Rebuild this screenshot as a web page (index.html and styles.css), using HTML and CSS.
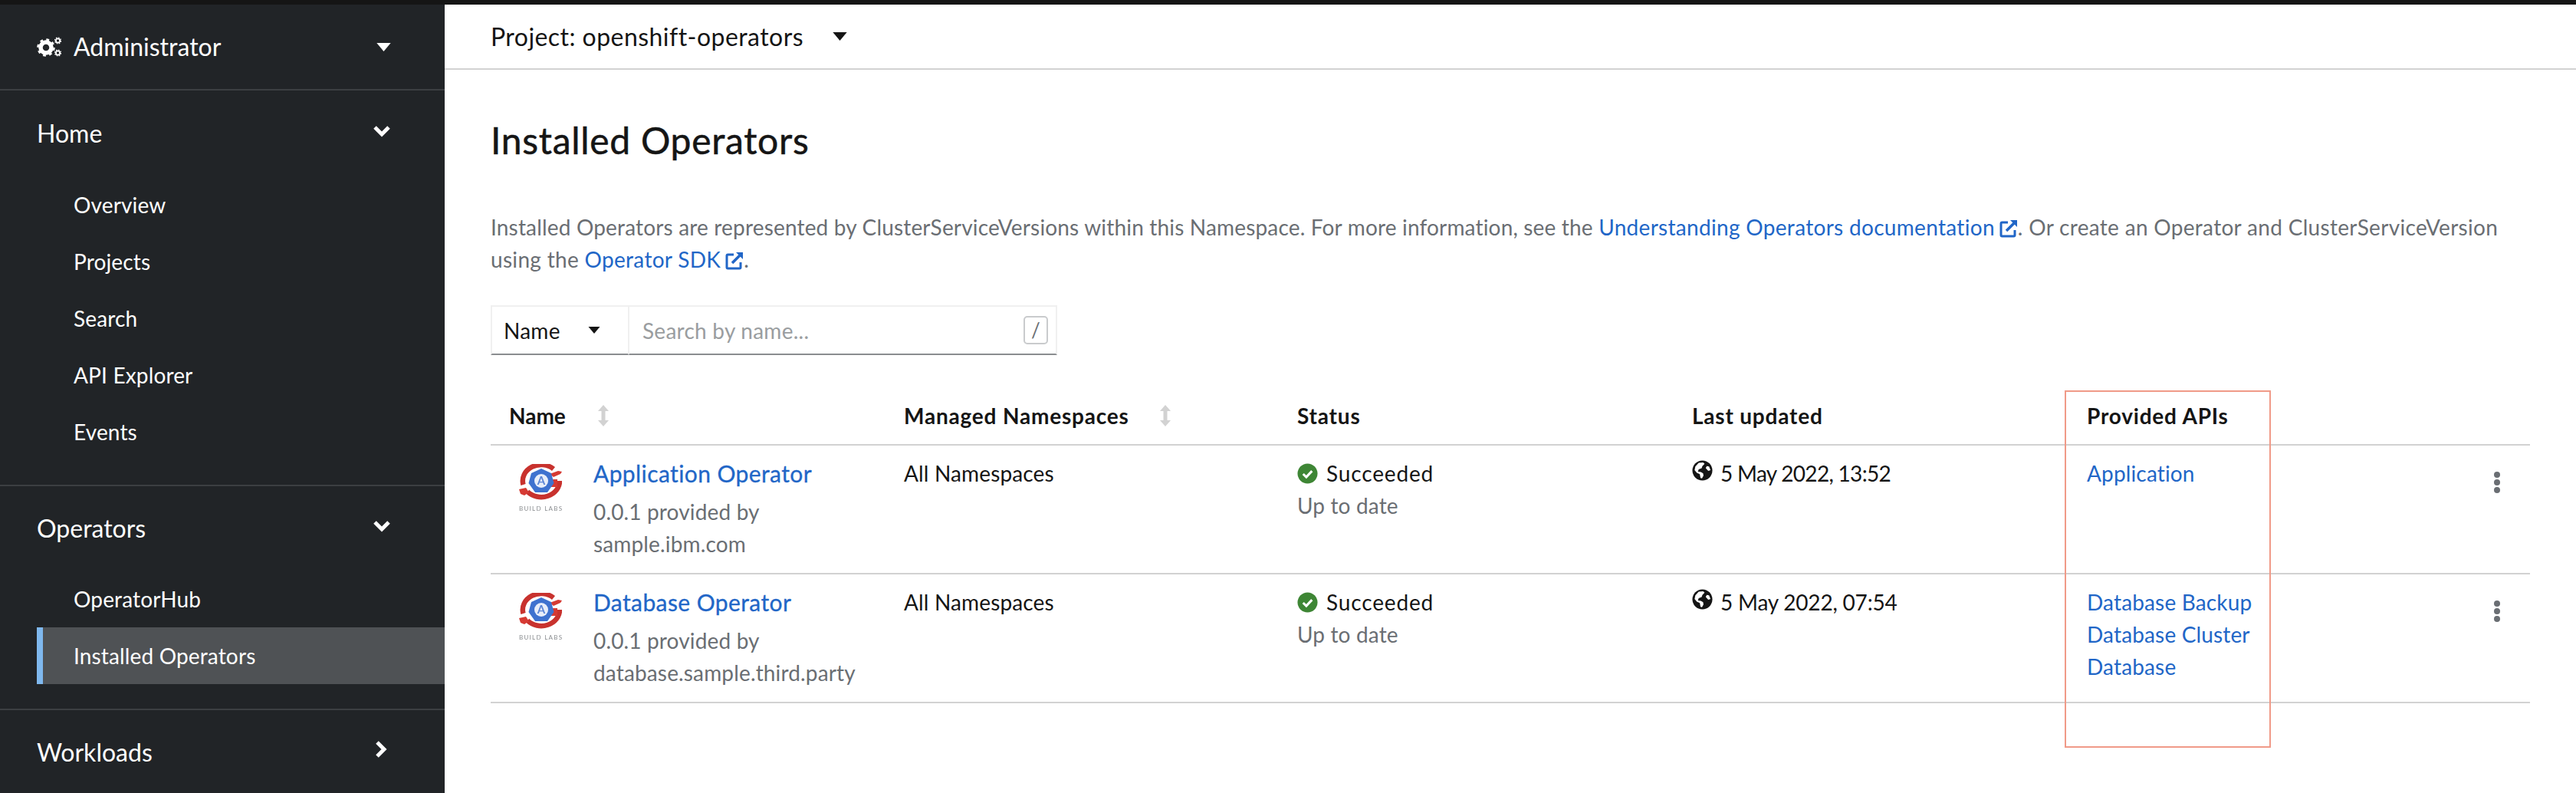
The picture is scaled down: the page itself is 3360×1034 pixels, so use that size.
FILE: index.html
```html
<!DOCTYPE html>
<html lang="en">
<head>
<meta charset="utf-8">
<title>Installed Operators</title>
<link rel="stylesheet" href="styles.css">
</head>
<body>
<svg class="defs" width="0" height="0" aria-hidden="true">
  <defs>
    <symbol id="logo" viewBox="0 0 56 62">
      <g class="logo-art">
        <path d="M45 6.500A24 21 0 0 0 5.500 27" fill="none" stroke="#c8322e" stroke-width="6.500"/>
        <path d="M11 36A24 21 0 0 0 53 22" fill="none" stroke="#c8322e" stroke-width="6.500"/>
        <path d="M0 33l9-2 4 6-6 4-5-2zM40 13l11-4 5 1-2 3-9 4zM42 20h8v10h-8z" fill="#d63a33"/>
        <path d="M29 6l13 6 3.500 13-8.500 12H21l-8.500-12L16 12z" fill="#3f72cf"/>
        <circle cx="29" cy="22" r="9" fill="#e9eef9"/>
        <text x="29" y="27" class="logo-a">A</text>
        <text x="28" y="61" class="logo-t" textLength="56">BUILD LABS</text>
      </g>
    </symbol>
    <symbol id="check" viewBox="0 0 28 28">
      <circle cx="14" cy="14" r="13.500" fill="#3e8635"/>
      <path d="M8 14.500l4.300 4.300L20 10.500" fill="none" stroke="#fff" stroke-width="3.200"/>
    </symbol>
    <symbol id="globe" viewBox="0 0 28 28">
      <circle cx="14" cy="14" r="13.500" fill="#151515"/>
      <path d="M9 3.500l6-.5 2 2-3 3-1 3-4 1.500-1 3 4 .5 3 2 .5 3-2 3.500-2-.5-1-5-4-2-3-3.500 1-5zM20 8l3 .5 2 5-3 1-2-2-1.500-2z" fill="#fff"/>
    </symbol>
    <symbol id="ext" viewBox="0 0 24 24">
      <path d="M11 4H3.500A1.500 1.500 0 0 0 2 5.500v15A1.500 1.500 0 0 0 3.500 22h15a1.500 1.500 0 0 0 1.500-1.500V14" fill="none" stroke="currentColor" stroke-width="3"/>
      <path d="M9 15L21 3" fill="none" stroke="currentColor" stroke-width="3.500"/>
      <path d="M14 1h9v9z" fill="currentColor"/>
    </symbol>
    <symbol id="sort" viewBox="0 0 14 28">
      <path d="M7 0l7 8H9.500v12H14l-7 8-7-8h4.500V8H0z" fill="#d2d2d2"/>
    </symbol>
    <symbol id="kebab" viewBox="0 0 8 28">
      <circle cx="4" cy="4" r="4"/><circle cx="4" cy="14" r="4"/><circle cx="4" cy="24" r="4"/>
    </symbol>
    <symbol id="chev-down" viewBox="0 0 24 16">
      <path d="M3 3l9 9 9-9" fill="none" stroke="#fff" stroke-width="5"/>
    </symbol>
    <symbol id="chev-right" viewBox="0 0 16 24">
      <path d="M3 3l9 9-9 9" fill="none" stroke="#fff" stroke-width="5"/>
    </symbol>
    <symbol id="caret" viewBox="0 0 20 12">
      <path d="M0 0h20L10 12z"/>
    </symbol>
    <symbol id="cogs" viewBox="0 0 32 26">
      <circle cx="12" cy="14" r="7" fill="none" stroke="#fff" stroke-width="5.500"/>
      <circle cx="12" cy="14" r="10.500" fill="none" stroke="#fff" stroke-width="2.500" stroke-dasharray="3.800 4.450"/>
      <circle cx="27.500" cy="5" r="2.600" fill="none" stroke="#fff" stroke-width="1.800"/>
      <circle cx="27.500" cy="5" r="4" fill="none" stroke="#fff" stroke-width="1.200" stroke-dasharray="1.700 1.440"/>
      <circle cx="27.500" cy="21" r="2.600" fill="none" stroke="#fff" stroke-width="1.800"/>
      <circle cx="27.500" cy="21" r="4" fill="none" stroke="#fff" stroke-width="1.200" stroke-dasharray="1.700 1.440"/>
    </symbol>
  </defs>
</svg>
<div class="topline"></div>
<div class="app">
  <nav class="sidebar">
    <div class="perspective">
      <span class="perspective-label"><svg class="ic-cogs"><use href="#cogs"/></svg>Administrator</span>
      <svg class="ic-caret-w"><use href="#caret"/></svg>
    </div>
    <section class="nav-group">
      <div class="nav-head first"><span>Home</span><svg class="ic-chev-d"><use href="#chev-down"/></svg></div>
      <a class="nav-item">Overview</a>
      <a class="nav-item">Projects</a>
      <a class="nav-item">Search</a>
      <a class="nav-item">API Explorer</a>
      <a class="nav-item">Events</a>
    </section>
    <section class="nav-group">
      <div class="nav-head"><span>Operators</span><svg class="ic-chev-d"><use href="#chev-down"/></svg></div>
      <a class="nav-item">OperatorHub</a>
      <a class="nav-item active">Installed Operators</a>
    </section>
    <section class="nav-group last">
      <div class="nav-head"><span>Workloads</span><svg class="ic-chev-r"><use href="#chev-right"/></svg></div>
    </section>
  </nav>
  <main class="main">
    <header class="project-bar">
      <span>Project: openshift-operators</span>
      <svg class="ic-caret-d"><use href="#caret"/></svg>
    </header>
    <div class="content">
      <h1 class="title">Installed Operators</h1>
      <p class="help"><span class="help-lead">Installed Operators are represented by ClusterServiceVersions within this Namespace. For more information, see the </span><a class="link">Understanding Operators documentation<svg class="ic-ext"><use href="#ext"/></svg></a>. Or create an Operator and ClusterServiceVersion<br>using the <a class="link">Operator SDK<svg class="ic-ext"><use href="#ext"/></svg></a>.</p>
      <div class="filter">
        <div class="filter-select"><span>Name</span><svg class="ic-caret-f"><use href="#caret"/></svg></div>
        <div class="filter-input"><span class="placeholder">Search by name...</span><kbd class="slash">/</kbd></div>
      </div>
      <div class="table">
        <div class="row head">
          <div class="cell th name-th"><span>Name</span><svg class="ic-sort"><use href="#sort"/></svg></div>
          <div class="cell th managed-th"><span>Managed Namespaces</span><svg class="ic-sort"><use href="#sort"/></svg></div>
          <div class="cell th">Status</div>
          <div class="cell th">Last updated</div>
          <div class="cell th">Provided APIs</div>
          <div class="cell"></div>
        </div>
        <div class="row">
          <div class="cell name-cell">
            <svg class="logo"><use href="#logo"/></svg>
            <div class="name-text">
              <a class="op-name">Application Operator</a>
              <div class="op-sub">0.0.1 provided by<br>sample.ibm.com</div>
            </div>
          </div>
          <div class="cell">All Namespaces</div>
          <div class="cell">
            <div class="status"><svg class="ic-check"><use href="#check"/></svg><span class="status-text">Succeeded</span></div>
            <div class="muted">Up to date</div>
          </div>
          <div class="cell"><div class="status"><svg class="ic-globe"><use href="#globe"/></svg><span class="date">5 May 2022, 13:52</span></div></div>
          <div class="cell"><a class="link api">Application</a></div>
          <div class="cell kebab-cell"><svg class="ic-kebab"><use href="#kebab"/></svg></div>
        </div>
        <div class="row">
          <div class="cell name-cell">
            <svg class="logo"><use href="#logo"/></svg>
            <div class="name-text">
              <a class="op-name">Database Operator</a>
              <div class="op-sub">0.0.1 provided by<br>database.sample.third.party</div>
            </div>
          </div>
          <div class="cell">All Namespaces</div>
          <div class="cell">
            <div class="status"><svg class="ic-check"><use href="#check"/></svg><span class="status-text">Succeeded</span></div>
            <div class="muted">Up to date</div>
          </div>
          <div class="cell"><div class="status"><svg class="ic-globe"><use href="#globe"/></svg><span class="date date-wide">5 May 2022, 07:54</span></div></div>
          <div class="cell">
            <a class="link api">Database Backup</a>
            <a class="link api">Database Cluster</a>
            <a class="link api">Database</a>
          </div>
          <div class="cell kebab-cell"><svg class="ic-kebab"><use href="#kebab"/></svg></div>
        </div>
        <div class="highlight"></div>
      </div>
    </div>
  </main>
</div>
</body>
</html>
```
FILE: styles.css
```css
* { box-sizing: border-box; }
html, body { margin: 0; padding: 0; }
body {
  width: 3360px;
  height: 1034px;
  overflow: hidden;
  background: #fff;
  color: #151515;
  font-family: "Lato", "Open Sans", sans-serif;
  font-size: 28px;
  line-height: 42px;
}
.defs { position: absolute; }
svg { display: block; flex: none; overflow: visible; }
.topline { height: 6px; background: #151515; }
.app { display: flex; height: 1028px; }

.sidebar { width: 580px; flex: none; background: #212427; color: #fff; overflow: hidden; }
.perspective {
  height: 112px;
  padding: 0 70px 0 48px;
  display: flex;
  align-items: center;
  justify-content: space-between;
  border-bottom: 2px solid #3c3f42;
  font-size: 32px;
}
.perspective-label { display: flex; align-items: center; }
.ic-cogs { width: 32px; height: 26px; margin-right: 16px; }
.ic-caret-w { width: 19px; height: 11px; fill: #fff; }
.nav-group { padding-bottom: 32px; border-bottom: 2px solid #3c3f42; }
.nav-group.last { border-bottom: 0; padding-bottom: 0; }
.nav-head {
  height: 110px;
  padding: 0 70px 0 48px;
  display: flex;
  align-items: center;
  justify-content: space-between;
  font-size: 32px;
}
.nav-head.first { height: 112px; }
.ic-chev-d { width: 24px; height: 16px; margin-top: -6px; }
.ic-chev-r { width: 16px; height: 24px; margin-top: -8px; margin-right: 5px; }
.nav-item {
  display: block;
  height: 74px;
  line-height: 74px;
  margin-left: 48px;
  padding-left: 48px;
  letter-spacing: .15px;
}
.nav-item.active { background: #4f5255; border-left: 8px solid #7fb8ee; padding-left: 40px; }

.main { flex: 1; min-width: 0; }
.project-bar {
  height: 85px;
  padding: 0 0 0 60px;
  display: flex;
  align-items: center;
  border-bottom: 2px solid #d2d2d2;
  font-size: 32px;
  letter-spacing: .45px;
}
.ic-caret-d { width: 19px; height: 11px; margin-left: 38px; fill: #151515; }
.content { padding: 0 60px; }
.title {
  margin: 0;
  padding-top: 60px;
  font-size: 48px;
  line-height: 64px;
  font-weight: 400;
  letter-spacing: .7px;
  -webkit-text-stroke: .5px #151515;
}
.help { margin: 60px 0 0; color: #6a6e73; letter-spacing: .31px; }
.help-lead { letter-spacing: .17px; }
.link { color: #2166c7; }
.ic-ext { display: inline-block; width: 24px; height: 24px; margin-left: 6px; vertical-align: -3px; }

.filter { display: flex; width: 739px; height: 65px; margin-top: 39px; }
.filter-select {
  width: 180px;
  display: flex;
  align-items: center;
  justify-content: space-between;
  padding: 0 36px 0 15px;
  border: 2px solid #f0f0f0;
  border-bottom-color: #8a8d90;
  border-right-width: 1px;
  letter-spacing: .25px;
}
.ic-caret-f { width: 16px; height: 9px; fill: #151515; }
.filter-input {
  flex: 1;
  display: flex;
  align-items: center;
  justify-content: space-between;
  padding: 0 10px 0 17px;
  border: 2px solid #f0f0f0;
  border-bottom-color: #8a8d90;
  border-left-width: 1px;
}
.placeholder { color: #9a9da0; letter-spacing: .25px; }
.slash {
  width: 32px;
  height: 37px;
  border: 2px solid #c9cbcd;
  border-radius: 5px;
  font-family: inherit;
  font-size: 26px;
  line-height: 33px;
  text-align: center;
  color: #6a6e73;
}

.table { position: relative; margin-top: 42px; }
.row {
  display: grid;
  grid-template-columns: 515px 513px 515px 515px 515px 87px;
  height: 168px;
  border-bottom: 2px solid #d2d2d2;
}
.row.head { height: 76px; align-items: center; }
.cell { padding: 15px 0 0 24px; letter-spacing: .15px; }
.th { padding-top: 0; font-weight: 700; display: flex; align-items: center; letter-spacing: .8px; }
.name-th { letter-spacing: 0; }
.ic-sort { width: 14px; height: 28px; margin-left: 40px; }
.name-th .ic-sort { margin-left: 42px; }
.name-cell { display: flex; padding-left: 37px; letter-spacing: 0; }
.logo { width: 56px; height: 62px; margin-top: 9px; margin-right: 41px; }
.logo-art { filter: blur(.6px); }
.logo-a { font-size: 15px; font-weight: 700; fill: #5d86d6; text-anchor: middle; }
.logo-t { font-size: 8px; fill: #8a8d90; text-anchor: middle; }
.name-text { min-width: 0; }
.op-name {
  display: block;
  font-size: 30px;
  color: #2166c7;
  margin-bottom: 8px;
  letter-spacing: .4px;
  -webkit-text-stroke: .3px #2166c7;
}
.op-sub { color: #6a6e73; white-space: nowrap; letter-spacing: .15px; }
.status { display: flex; align-items: center; }
.status-text { letter-spacing: .85px; }
.date { letter-spacing: -.7px; }
.date-wide { letter-spacing: -.2px; }
.ic-check { width: 27px; height: 27px; margin-right: 11px; }
.ic-globe { width: 27px; height: 27px; margin: -8px 10px 0 0; }
.muted { color: #6a6e73; }
.api { display: block; }
.kebab-cell { padding: 34px 0 0 40px; }
.ic-kebab { width: 8px; height: 28px; fill: #6a6e73; }
.highlight {
  position: absolute;
  left: 2053px;
  top: 4px;
  width: 269px;
  height: 466px;
  border: 2px solid #f09a88;
}
```
